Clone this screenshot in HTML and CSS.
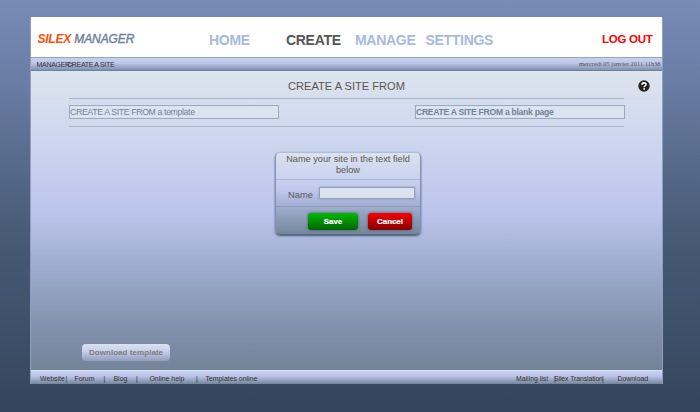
FILE: index.html
```html
<!DOCTYPE html>
<html lang="en">
<head>
<meta charset="utf-8">
<title>Silex Manager</title>
<link rel="stylesheet" href="styles.css">
</head>
<body>
<div class="window">
  <header class="header">
    <div class="logo"><b>SILEX</b> <span>MANAGER</span></div>
    <nav class="nav">
      <a class="home">HOME</a><a class="create">CREATE</a><a class="manage">MANAGE</a><a class="settings">SETTINGS</a>
    </nav>
    <a class="logout">LOG OUT</a>
  </header>
  <div class="bar">
    <span class="crumb-root">MANAGER&gt;</span><span class="crumb-page">CREATE A SITE</span>
    <time class="date">mercredi 05 janvier 2011 11h38</time>
  </div>
  <main class="content">
    <div class="title-row">
      <h1 class="title">CREATE A SITE FROM</h1>
      <svg class="help" viewBox="0 0 12 12"><circle cx="6" cy="6" r="5.7" fill="#26221e"/><path d="M4 4.7C4 2.3 8 2.3 8 4.5C8 5.9 6.1 5.7 6.1 7.2" fill="none" stroke="#fff" stroke-width="1.6"/><circle cx="6.1" cy="8.9" r=".85" fill="#fff"/></svg>
    </div>
    <div class="choices">
      <div class="choice">CREATE A SITE FROM a template</div>
      <div class="choice blank">CREATE A SITE FROM a blank page</div>
    </div>
    <section class="dialog">
      <p class="message">Name your site in the text field below</p>
      <div class="field"><label for="name">Name</label><input id="name" type="text"></div>
      <div class="actions"><button class="save">Save</button><button class="cancel">Cancel</button></div>
    </section>
    <button class="download">Download template</button>
  </main>
  <footer class="footer">
    <span class="website">Website</span><i class="sep-a">|</i><span class="forum">Forum</span><i class="sep-b">|</i><span class="blog">Blog</span><i class="sep-c">|</i><span class="online">Online help</span><i class="sep-d">|</i><span class="templates">Templates online</span><span class="mailing">Mailing list</span><i class="sep-e">|</i><span class="translation">Silex Translation</span><i class="sep-f">|</i><span class="dl">Download</span>
  </footer>
</div>
</body>
</html>
```
FILE: styles.css
```css
* { box-sizing: border-box; }
html { height: 100%; }
body {
  margin: 0;
  height: 412px;
  padding: 17px 37.5px 0 30px;
  overflow: hidden;
  font-family: "Liberation Sans", Arial, sans-serif;
  background: linear-gradient(#778bb7 0, #6a7da4 20%, #566a8a 40%, #455974 60%, #3e506a 80%, #34445a 100%);
}
.window {
  width: 633px;
  height: 367px;
  border: solid #8e9fc0;
  border-width: 0 1px;
  display: flex;
  flex-direction: column;
}
.header {
  height: 40px;
  background: #fff;
  display: flex;
  white-space: nowrap;
  font-weight: bold;
}
.logo {
  width: 178px;
  padding: 15px 0 0 6.5px;
  font: italic 12px/15px "Liberation Sans", sans-serif;
  color: #6f809b;
}
.logo b { color: #fb4f0c; letter-spacing: -.25px; }
.logo span { letter-spacing: -.1px; -webkit-text-stroke: .4px #6f809b; }
.nav { display: flex; width: 393px; padding-top: 15px; font-size: 14px; line-height: 16px; letter-spacing: -.3px; color: #a9b9dc; }
.home { width: 77px; }
.create { width: 69px; color: #555; }
.manage { width: 70.5px; }
.logout { padding-top: 15px; font-size: 11.5px; line-height: 15px; letter-spacing: -.25px; color: #fe0000; }
.bar {
  height: 14px;
  border-top: 1px solid #93a5bb;
  border-bottom: 1px solid #707f9a;
  display: flex;
  white-space: nowrap;
  font-size: 7px;
  line-height: 13px;
  letter-spacing: -.3px;
  color: #35302e;
  background: linear-gradient(#c7d0e7, #bec8ec 40%, #8190b0);
}
.crumb-root { width: 30.5px; margin-left: 5.5px; }
.date { margin-left: auto; margin-right: 1.5px; font: 6.4px/11px "Liberation Serif", serif; letter-spacing: 0; color: #55504f; }
.content {
  height: 299px;
  border-top: 1px solid #dce4f0;
  display: flex;
  flex-direction: column;
  background: linear-gradient(#dce4ee 0, #ced7ef 22%, #bcc5ec 47%, #a1aed0 64%, #8292ae 85%, #738399 100%);
}
.title-row { display: flex; height: 26px; }
.title { width: 607px; margin: 0; padding: 7px 0 0 257px; font-size: 11.1px; line-height: 14px; font-weight: normal; color: #5d554d; white-space: nowrap; }
.help { width: 12px; height: 12px; margin-top: 8px; }
.choices {
  width: 555px;
  height: 29px;
  margin-left: 38px;
  padding-top: 6px;
  border: solid #a7b4cb;
  border-width: 1px 0;
  display: flex;
  justify-content: space-between;
}
.choice {
  width: 210px;
  height: 14px;
  border: 1px solid #97a8bf;
  background: #dbe4ee;
  padding-left: 0;
  font-size: 8.8px;
  line-height: 12.5px;
  letter-spacing: -.4px;
  color: #71829b;
  white-space: nowrap;
}
.choice.blank { margin-right: -1px; font-weight: bold; font-size: 8.6px; letter-spacing: -.28px; }
.dialog {
  width: 146px;
  height: 83px;
  margin: 25px 0 0 244px;
  border: 1px solid #8290ae;
  border-top-color: #b0bdd2;
  border-bottom-color: #56677e;
  border-radius: 5px;
  box-shadow: 0 1px 2px #46536e;
  background: linear-gradient(#dbe3ee 0, #c5ceef 38%, #bcc5ec 48%, #a0adcf 66%, #76869d 100%);
  color: #5c5550;
}
.message { height: 27px; margin: 0; padding: 1px 8px 0; text-align: center; font-size: 9.2px; line-height: 11px; border-bottom: 1px solid #aab7d1; }
.field { height: 27px; display: flex; padding: 7px 5px 0 12px; border-bottom: 1px solid #8e9dbd; font-size: 9.3px; line-height: 16px; }
.field label { width: 31px; }
.field input { width: 96px; height: 12px; margin-top: 0; padding: 0 2px; border: 1px solid #8e9fb7; border-radius: 1px; background: #dbe4ee; box-shadow: 0 0 2px #8190aa; }
button { border: 0; padding: 0; font-family: inherit; font-weight: bold; }
.actions { display: flex; gap: 10px; padding: 6px 0 0 32px; }
.actions button { height: 17px; border-radius: 3px; color: #fff; font-size: 7.9px; line-height: 17px; box-shadow: 0 0 3px #46536e; -webkit-text-stroke: .2px #fff; }
.save { width: 50px; background: linear-gradient(#00b900, #006400); }
.cancel { width: 44px; background: linear-gradient(#fb0000, #800000); }
.download {
  width: 88px;
  height: 17px;
  margin: auto 0 9px 51px;
  border-radius: 4px;
  background: linear-gradient(#dce2f1, #c5cdec 45%, #8f9eba);
  color: #807b7b;
  font-size: 8.1px;
  line-height: 16px;
  letter-spacing: 0;
}
.footer {
  height: 14px;
  border-top: 1px solid #d9e0f1;
  display: flex;
  white-space: nowrap;
  font-size: 6.9px;
  line-height: 15px;
  color: #35302e;
  background: linear-gradient(#c8d1ef, #bac4e8 40%, #74849d);
}
.footer i { font-style: normal; width: 0; }
.website { width: 25.5px; margin-left: 9px; }
.sep-a { margin-right: 9px; }
.forum { width: 29px; }
.sep-b { margin-right: 10px; }
.blog { width: 22.5px; }
.sep-c { margin-right: 13.5px; }
.online { width: 46.5px; }
.sep-d { margin-right: 9.5px; }
.mailing { margin-left: auto; width: 38px; }
.translation { width: 48px; letter-spacing: -.1px; }
.sep-f { margin-right: 15.5px; }
.dl { width: 44.5px; }
```
